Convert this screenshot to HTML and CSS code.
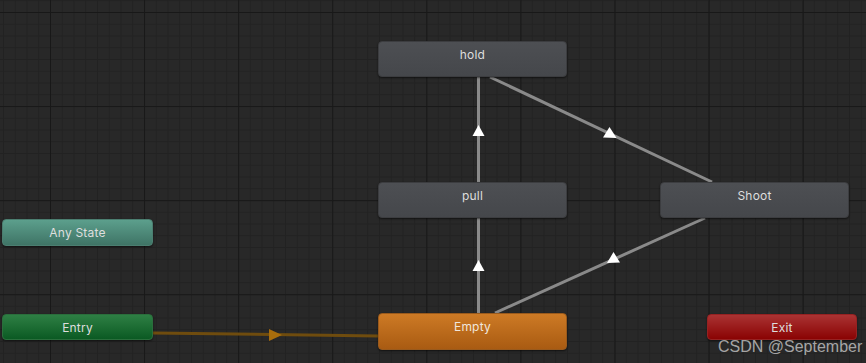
FILE: index.html
```html
<!DOCTYPE html>
<html lang="en">
<head>
    <meta charset="UTF-8">
    <meta name="viewport" content="width=device-width, initial-scale=1.0">
    <title>Animator</title>
    <link rel="stylesheet" href="styles.css">
</head>
<body>

    <div class="graph">
        <svg class="links" width="866" height="363" viewBox="0 0 866 363">
            <!-- entry -> default state -->
            <line x1="153" y1="333" x2="378" y2="336" class="link-entry"/>
            <polygon points="269,329 282,335 269,341" class="arrow-entry"/>

            <!-- transitions -->
            <line x1="478.5" y1="77" x2="478.5" y2="182" class="link"/>
            <line x1="478.5" y1="218" x2="478.5" y2="313" class="link"/>
            <line x1="490" y1="77" x2="712" y2="182" class="link"/>
            <line x1="495" y1="313" x2="705" y2="218" class="link"/>

            <polygon points="478.5,125 472.5,136 484.5,136" class="arrow"/>
            <polygon points="478.5,260 472.5,271 484.5,271" class="arrow"/>
            <polygon points="609.5,127 603,137.5 616.5,138" class="arrow"/>
            <polygon points="613.5,252 607,263 620,262.5" class="arrow"/>
        </svg>

        <div class="node state" style="left: 378px; top: 41px;">hold</div>
        <div class="node state" style="left: 378px; top: 182px;">pull</div>
        <div class="node state" style="left: 660px; top: 182px;">Shoot</div>
        <div class="node state default" style="left: 378px; top: 313px;">Empty</div>

        <div class="node small any" style="left: 2px; top: 219px;">Any State</div>
        <div class="node small entry" style="left: 2px; top: 314px;">Entry</div>
        <div class="node small exit" style="left: 707px; top: 314px;">Exit</div>

        <div class="watermark">CSDN @September</div>
    </div>

</body>
</html>
```
FILE: styles.css
```css
body {
    margin: 0;
    padding: 0;
    background: #282828;
    font-family: 'Inter', 'Noto Sans', sans-serif;
    overflow: hidden;
}

.graph {
    position: relative;
    width: 866px;
    height: 363px;
    background-color: #282828;
    background-image:
        linear-gradient(to right, #181818 1px, transparent 1px),
        linear-gradient(to bottom, #181818 1px, transparent 1px),
        linear-gradient(to right, #222222 1px, transparent 1px),
        linear-gradient(to bottom, #222222 1px, transparent 1px);
    background-size: 94.1px 94.1px, 94.1px 94.1px, 11.7625px 11.7625px, 11.7625px 11.7625px;
    background-position: 50px 12px;
    overflow: hidden;
}

.links {
    position: absolute;
    left: 0;
    top: 0;
}

.link {
    stroke: #8a8a8a;
    stroke-width: 3;
}

.link-entry {
    stroke: #6f4c0e;
    stroke-width: 3;
}

.arrow {
    fill: #ffffff;
}

.arrow-entry {
    fill: #a86d0c;
}

.node {
    position: absolute;
    box-sizing: border-box;
    width: 189px;
    height: 36px;
    border-radius: 4px;
    color: #dedede;
    font-size: 12px;
    line-height: 25px;
    letter-spacing: 0.2px;
    text-align: center;
    box-shadow: 0 1px 2px rgba(0, 0, 0, 0.55);
}

.state {
    background: linear-gradient(to bottom, #4d4f53, #45474b);
    border: 1px solid #3c3d40;
}

.default {
    height: 37px;
    background: linear-gradient(to bottom, #cd7a25, #a95b12);
    border: 1px solid #9a5a1c;
    color: #f0e6dc;
}

.small {
    width: 151px;
    height: 27px;
    line-height: 25px;
}

.any {
    background: linear-gradient(to bottom, #5c9f8c, #3f7466);
    border: 1px solid #4b7e70;
}

.entry {
    height: 26px;
    background: linear-gradient(to bottom, #2e7f44, #0b5a23);
    border: 1px solid #2a6e3c;
}

.exit {
    width: 150px;
    height: 26px;
    background: linear-gradient(to bottom, #aa3333, #8a0303);
    border: 1px solid #962222;
}

.watermark {
    position: absolute;
    left: 718px;
    top: 339px;
    font-family: 'Liberation Sans', Arial, sans-serif;
    font-size: 16px;
    line-height: 16px;
    color: rgba(200, 200, 200, 0.8);
    white-space: nowrap;
}
```
